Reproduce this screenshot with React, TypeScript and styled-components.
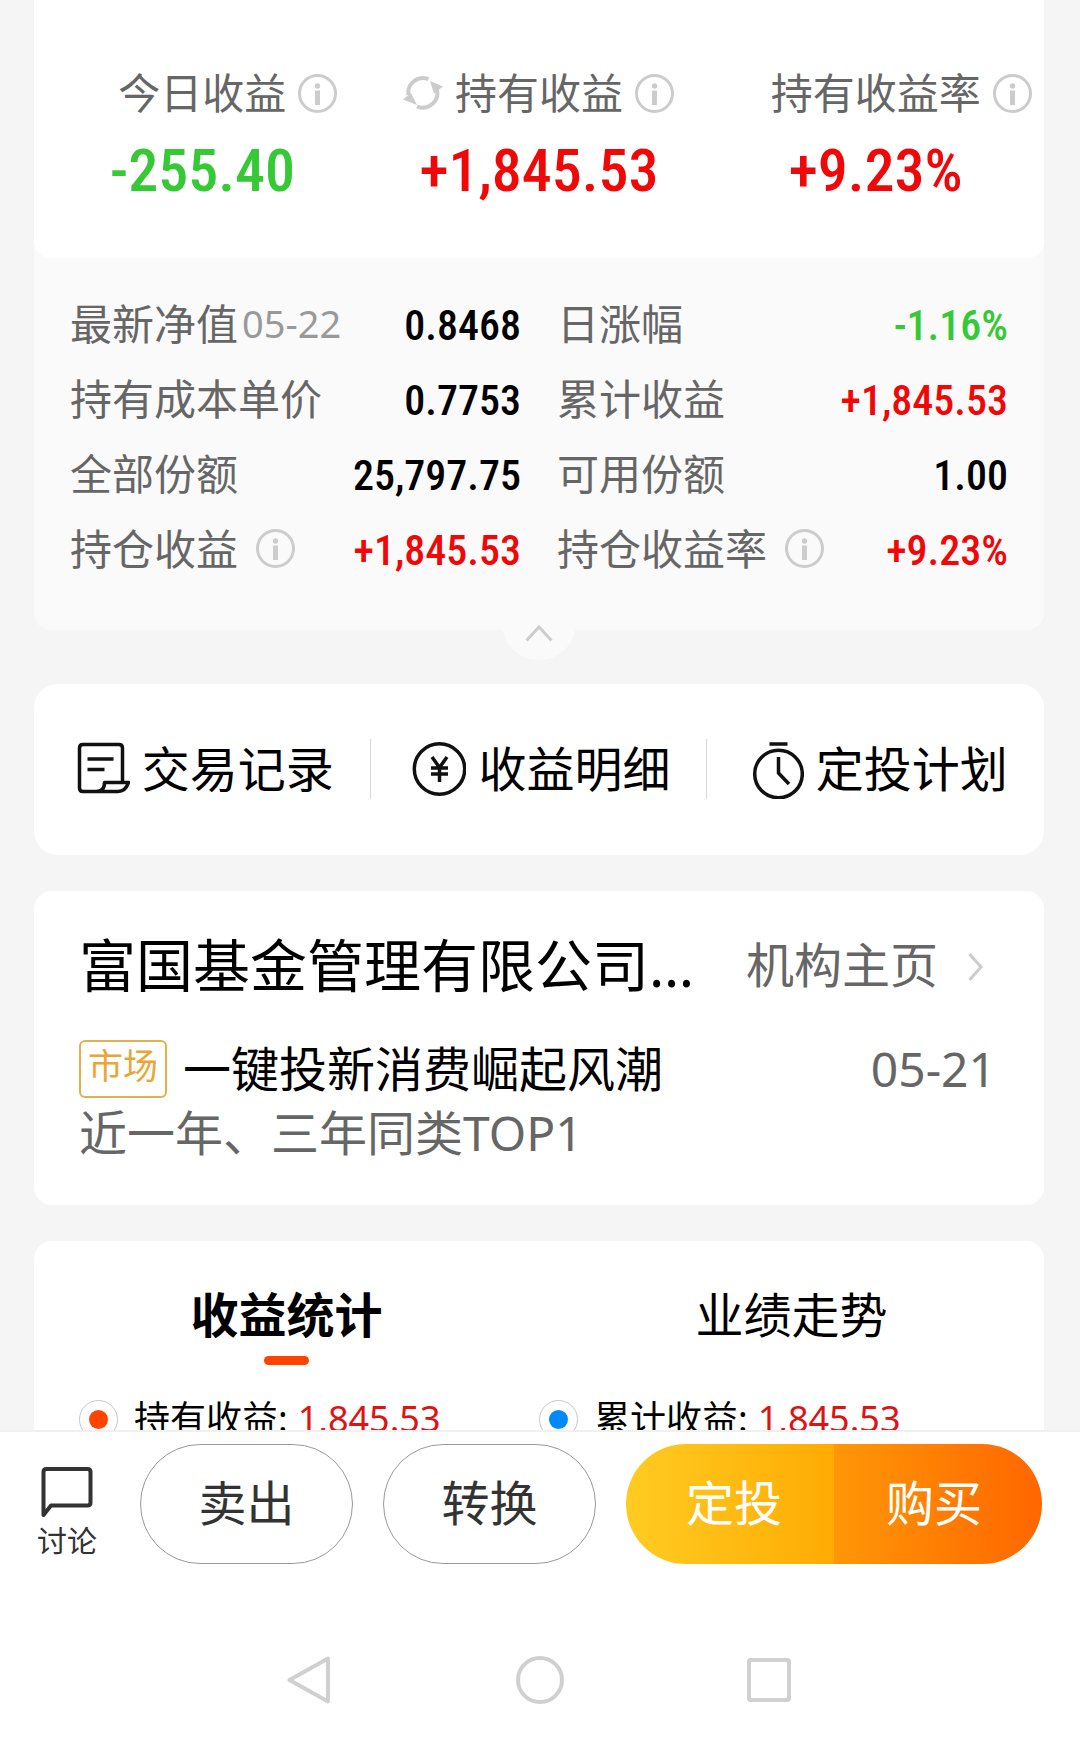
import React from "react";
import styled, { createGlobalStyle } from "styled-components";

const numberFont = `"Roboto Condensed", "Liberation Sans Narrow", Roboto, sans-serif`;

const GlobalStyle = createGlobalStyle`
  * { box-sizing: border-box; }
  body {
    margin: 0;
    background: #f5f5f5;
    color: #000;
    font-family: "Noto Sans", "Noto Sans CJK SC", sans-serif;
  }
  button { font: inherit; color: inherit; background: none; border: 0; padding: 0; margin: 0; cursor: pointer; }
  svg { display: block; flex: none; }
  dl, dd, dt, h2, p { margin: 0; font-weight: 400; }
`;

type Tone = "up" | "down" | "plain";
const tones: Record<Tone, string> = { up: "#f00808", down: "#36c936", plain: "#000" };

const Page = styled.div`
  display: flex;
  flex-direction: column;
  height: 100vh;
`;

const Content = styled.main`
  flex: 1;
  min-height: 0;
  overflow-y: auto;
  scrollbar-width: none;
  padding: 0 36px 0 34px;
`;

const Holding = styled.section`
  position: relative;
  background: #fafafa;
  border-radius: 0 0 17px 17px;
  margin-bottom: 54px;
`;

const Summary = styled.dl`
  display: grid;
  grid-template-columns: repeat(3, 1fr);
  padding: 65px 0 55px;
  background: #fff;
  border-radius: 0 0 17px 17px;
`;

const SummaryItem = styled.div`
  display: flex;
  flex-direction: column;
  gap: 18px;
`;

const SummaryLabel = styled.dt`
  display: grid;
  grid-template-columns: 1fr auto 1fr;
  align-items: center;
  column-gap: 12px;
  font-size: 42px;
  line-height: 56px;
  color: #666;
  white-space: nowrap;
`;

const LeadSlot = styled.span`
  display: flex;
  justify-content: flex-end;
`;

const SummaryValue = styled.dd<{ $tone: Tone }>`
  font-family: ${numberFont};
  font-size: 60px;
  font-weight: 500;
  line-height: 64px;
  text-align: center;
  color: ${(p) => tones[p.$tone]};
`;

const Details = styled.dl`
  display: grid;
  grid-template-columns: 1fr 1fr;
  column-gap: 36px;
  padding: 28px 36px 44px;
`;

const DetailRow = styled.div`
  display: flex;
  align-items: baseline;
  justify-content: space-between;
  line-height: 75px;
  height: 75px;
  white-space: nowrap;
`;

const DetailLabel = styled.dt`
  display: flex;
  align-items: center;
  font-size: 42px;
  color: #666;
`;

const DetailDate = styled.span`
  margin-left: 4px;
  font-size: 38px;
  color: #999;
`;

const DetailValue = styled.dd<{ $tone: Tone }>`
  font-family: ${numberFont};
  font-size: 42px;
  font-weight: 500;
  color: ${(p) => tones[p.$tone]};
`;

const InfoButton = styled.button<{ $spaced?: boolean }>`
  width: 39px;
  height: 39px;
  margin-left: ${(p) => (p.$spaced ? "18px" : "0")};
`;

const Collapse = styled.button`
  position: absolute;
  left: calc(50% - 37px);
  bottom: -30px;
  display: flex;
  align-items: center;
  justify-content: center;
  width: 74px;
  height: 74px;
  padding-top: 20px;
  border-radius: 50%;
  background: #fafafa;
`;

const Card = styled.section<{ $radius: number }>`
  background: #fff;
  border-radius: ${(p) => p.$radius}px;
  margin-bottom: 36px;
`;

const Actions = styled.nav`
  display: grid;
  grid-template-columns: repeat(3, 1fr);
  padding: 55px 0 56px;
`;

const Action = styled.a`
  display: flex;
  align-items: center;
  justify-content: center;
  gap: 12px;
  height: 60px;
  font-size: 48px;
  line-height: 60px;
  color: #000;
  text-decoration: none;
  white-space: nowrap;
  &:not(:last-child) { border-right: 1px solid #d8d8d8; }
`;

const Org = styled.div`
  padding: 34px 48px 40px 45px;
`;

const OrgHead = styled.div`
  display: flex;
  align-items: center;
  justify-content: space-between;
  margin-bottom: 32px;
  line-height: 80px;
  white-space: nowrap;
`;

const OrgName = styled.h2`
  font-size: 57px;
`;

const OrgLink = styled.a`
  display: flex;
  align-items: center;
  gap: 30px;
  font-size: 48px;
  color: #666;
  text-decoration: none;
`;

const Post = styled.div`
  display: flex;
  align-items: center;
  font-size: 48px;
  line-height: 64px;
  white-space: nowrap;
`;

const Tag = styled.span`
  height: 58px;
  margin-right: 16px;
  padding: 0 7px;
  border: 2px solid #e3b04b;
  border-radius: 6px;
  font-size: 35px;
  line-height: 48px;
  color: #e8a735;
`;

const PostDate = styled.time`
  margin-left: auto;
  color: #666;
`;

const PostNote = styled.p`
  font-size: 48px;
  line-height: 64px;
  color: #666;
`;

const Tabs = styled.div`
  display: grid;
  grid-template-columns: 1fr 1fr;
  padding-top: 42px;
`;

const Tab = styled.button<{ $active?: boolean }>`
  display: flex;
  flex-direction: column;
  align-items: center;
  gap: 9px;
  font-size: 48px;
  font-weight: ${(p) => (p.$active ? 700 : 400)};
  line-height: 64px;
  &::after {
    content: "";
    width: 45px;
    height: 9px;
    border-radius: 5px;
    background: ${(p) => (p.$active ? "#ff4400" : "transparent")};
  }
`;

const Legend = styled.div`
  display: grid;
  grid-template-columns: 1fr 1fr;
  padding: 26px 45px;
`;

const LegendItem = styled.div`
  display: flex;
  align-items: center;
  font-size: 36px;
  line-height: 56px;
  white-space: nowrap;
`;

const Marker = styled.span<{ $color: string }>`
  display: flex;
  align-items: center;
  justify-content: center;
  width: 39px;
  height: 39px;
  margin-right: 16px;
  border: 1px solid #c8c8c8;
  border-radius: 50%;
  &::after {
    content: "";
    width: 19px;
    height: 19px;
    border-radius: 50%;
    background: ${(p) => p.$color};
  }
`;

const LegendValue = styled.span`
  margin-left: 10px;
  color: #dc1414;
`;

const Footer = styled.footer`
  flex: none;
  background: #fff;
  border-top: 2px solid #f0f0f0;
`;

const TradeBar = styled.div`
  display: grid;
  grid-template-columns: 73px 213fr 213fr 416fr;
  column-gap: 30px;
  padding: 12px 38px 92px 37px;
  color: #333;
  font-size: 48px;
`;

const Chat = styled.button`
  display: flex;
  flex-direction: column;
  align-items: center;
  gap: 4px;
  width: 60px;
  padding-top: 23px;
  font-size: 30px;
  line-height: 36px;
`;

const Outlined = styled.button`
  height: 120px;
  padding-bottom: 8px;
  border: 1px solid #999;
  border-radius: 60px;
`;

const BuyGroup = styled.div`
  display: grid;
  grid-template-columns: 1fr 1fr;
  overflow: hidden;
  border-radius: 60px;
`;

const Filled = styled.button<{ $from: string; $to: string }>`
  height: 120px;
  padding-bottom: 8px;
  color: #fff;
  background: linear-gradient(90deg, ${(p) => p.$from}, ${(p) => p.$to});
  &:first-child { padding-left: 8px; }
  &:last-child { padding-right: 8px; }
`;

const SystemNav = styled.nav`
  display: flex;
  justify-content: center;
  gap: 182px;
  padding-bottom: 34px;
`;

const Info = ({ name, spaced }: { name: string; spaced?: boolean }) => (
  <InfoButton type="button" aria-label={`${name}说明`} $spaced={spaced}>
    <svg width="39" height="39" viewBox="0 0 39 39" fill="none">
      <circle cx="19.5" cy="19.5" r="18" stroke="#ccc" strokeWidth="3" />
      <circle cx="19.5" cy="12" r="2.7" fill="#ccc" />
      <path d="M19.5 16.5V31" stroke="#ccc" strokeWidth="5" />
    </svg>
  </InfoButton>
);

const RefreshIcon = () => (
  <svg width="40" height="36" viewBox="0 0 40 36" fill="none">
    <path d="M25.500 4.200A14.600 14.600 0 0 0 5.500 20" stroke="#ccc" strokeWidth="4" />
    <path d="M14 31.500A14.600 14.600 0 0 0 34 15" stroke="#ccc" strokeWidth="4" />
    <path d="M27 6L40 11.500L31 18.500Z" fill="#ccc" />
    <path d="M0 24.500L8 18L14 30Z" fill="#ccc" />
  </svg>
);

const RecordIcon = () => (
  <svg width="60" height="60" viewBox="0 0 60 60" fill="none" stroke="#111" strokeWidth="3.5" strokeLinejoin="round">
    <path d="M52.500 43V9Q52.500 5.500 49 5.500H13Q9.500 5.500 9.500 9V49Q9.500 52.500 13 52.500H48Q55.500 52.500 58.500 43.500H34.500Q34.500 52.500 26 52.500" />
    <path d="M17.500 20H43.500M17.500 30.500H34.500" />
  </svg>
);

const YuanIcon = () => (
  <svg width="60" height="60" viewBox="0 0 60 60" fill="none" stroke="#111" strokeWidth="3.5">
    <circle cx="33.500" cy="30" r="25.200" />
    <path d="M26 18L33.500 28.500L41 18M33.500 28.500V43M25 29H42M25 35H42" />
  </svg>
);

const TimerIcon = () => (
  <svg width="60" height="60" viewBox="0 0 60 60" fill="none" stroke="#111" strokeWidth="3.5">
    <circle cx="34.500" cy="35" r="23.800" />
    <path d="M25.500 5H43.500M34.500 18V34L45 45" />
  </svg>
);

const summary: { label: string; value: string; tone: Tone; refresh?: boolean }[] = [
  { label: "今日收益", value: "-255.40", tone: "down" },
  { label: "持有收益", value: "+1,845.53", tone: "up", refresh: true },
  { label: "持有收益率", value: "+9.23%", tone: "up" },
];

const details: { label: string; value: string; tone: Tone; date?: string; info?: boolean }[] = [
  { label: "最新净值", date: "05-22", value: "0.8468", tone: "plain" },
  { label: "日涨幅", value: "-1.16%", tone: "down" },
  { label: "持有成本单价", value: "0.7753", tone: "plain" },
  { label: "累计收益", value: "+1,845.53", tone: "up" },
  { label: "全部份额", value: "25,797.75", tone: "plain" },
  { label: "可用份额", value: "1.00", tone: "plain" },
  { label: "持仓收益", value: "+1,845.53", tone: "up", info: true },
  { label: "持仓收益率", value: "+9.23%", tone: "up", info: true },
];

export default function App() {
  return (
    <Page>
      <GlobalStyle />
      <Content>
        <Holding>
          <Summary>
            {summary.map((s) => (
              <SummaryItem key={s.label}>
                <SummaryLabel>
                  <LeadSlot>
                    {s.refresh && (
                      <button type="button" aria-label="刷新">
                        <RefreshIcon />
                      </button>
                    )}
                  </LeadSlot>
                  <span>{s.label}</span>
                  <Info name={s.label} />
                </SummaryLabel>
                <SummaryValue $tone={s.tone}>{s.value}</SummaryValue>
              </SummaryItem>
            ))}
          </Summary>
          <Details>
            {details.map((d) => (
              <DetailRow key={d.label}>
                <DetailLabel>
                  {d.label}
                  {d.date && <DetailDate>{d.date}</DetailDate>}
                  {d.info && <Info name={d.label} spaced />}
                </DetailLabel>
                <DetailValue $tone={d.tone}>{d.value}</DetailValue>
              </DetailRow>
            ))}
          </Details>
          <Collapse type="button" aria-label="收起">
            <svg width="28" height="18" viewBox="0 0 28 18" fill="none" stroke="#ccc" strokeWidth="3">
              <path d="M1.500 16.500L14 3L26.500 16.500" />
            </svg>
          </Collapse>
        </Holding>

        <Card $radius={24}>
          <Actions>
            <Action href="#records"><RecordIcon />交易记录</Action>
            <Action href="#income"><YuanIcon />收益明细</Action>
            <Action href="#plan"><TimerIcon />定投计划</Action>
          </Actions>
        </Card>

        <Card $radius={18}>
          <Org>
            <OrgHead>
              <OrgName>富国基金管理有限公司…</OrgName>
              <OrgLink href="#org">
                机构主页
                <svg width="28" height="32" viewBox="0 0 28 32" fill="none" stroke="#ccc" strokeWidth="3">
                  <path d="M1.500 5L13 18L1.500 31" />
                </svg>
              </OrgLink>
            </OrgHead>
            <Post>
              <Tag>市场</Tag>
              一键投新消费崛起风潮
              <PostDate>05-21</PostDate>
            </Post>
            <PostNote>近一年、三年同类TOP1</PostNote>
          </Org>
        </Card>

        <Card $radius={18}>
          <Tabs role="tablist">
            <Tab type="button" role="tab" aria-selected="true" $active>收益统计</Tab>
            <Tab type="button" role="tab" aria-selected="false">业绩走势</Tab>
          </Tabs>
          <Legend>
            <LegendItem>
              <Marker $color="#ff4400" />持有收益:<LegendValue>1,845.53</LegendValue>
            </LegendItem>
            <LegendItem>
              <Marker $color="#0088ff" />累计收益:<LegendValue>1,845.53</LegendValue>
            </LegendItem>
          </Legend>
        </Card>
      </Content>

      <Footer>
        <TradeBar>
          <Chat type="button">
            <svg width="52" height="52" viewBox="0 0 52 52" fill="none" stroke="#333" strokeWidth="4" strokeLinejoin="round">
              <path d="M2.500 48V5Q2.500 2 5.500 2H46.500Q49.500 2 49.500 5V35.500Q49.500 38.500 46.500 38.500H10Z" />
            </svg>
            讨论
          </Chat>
          <Outlined type="button">卖出</Outlined>
          <Outlined type="button">转换</Outlined>
          <BuyGroup>
            <Filled type="button" $from="#ffcc22" $to="#ffab03">定投</Filled>
            <Filled type="button" $from="#ff9706" $to="#ff6600">购买</Filled>
          </BuyGroup>
        </TradeBar>
        <SystemNav>
          <button type="button" aria-label="返回">
            <svg width="48" height="48" viewBox="0 0 48 48" fill="none" stroke="#d0d0d0" strokeWidth="4" strokeLinejoin="round">
              <path d="M42 2.500V45.500L3.500 24Z" />
            </svg>
          </button>
          <button type="button" aria-label="主页">
            <svg width="48" height="48" viewBox="0 0 48 48" fill="none" stroke="#d0d0d0" strokeWidth="4">
              <circle cx="24" cy="24" r="22" />
            </svg>
          </button>
          <button type="button" aria-label="最近任务">
            <svg width="48" height="48" viewBox="0 0 48 48" fill="none" stroke="#d0d0d0" strokeWidth="4">
              <rect x="3" y="4" width="40" height="40" rx="2" />
            </svg>
          </button>
        </SystemNav>
      </Footer>
    </Page>
  );
}
